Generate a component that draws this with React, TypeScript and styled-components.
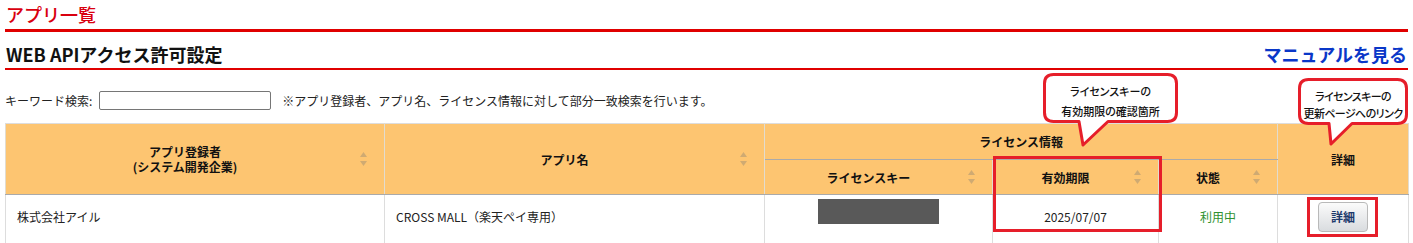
import React from 'react';
import styled, { createGlobalStyle } from 'styled-components';

const GlobalStyle = createGlobalStyle`
  *, *::before, *::after { box-sizing: border-box; }
  html, body { margin: 0; padding: 0; background: #fff; }
  body {
    font-family: "Noto Sans CJK JP", "Noto Sans", sans-serif;
    color: #222;
  }
`;

const Page = styled.div`
  position: relative;
  width: 1413px;
  padding: 0 5px;
`;

const PageTitle = styled.h1`
  margin: 0;
  height: 32px;
  padding: 1px 0 0 1px;
  font-size: 18px;
  font-weight: 500;
  line-height: 26px;
  color: #d9000f;
  border-bottom: 3px solid #e00000;
`;

const SectionHeader = styled.div`
  display: flex;
  justify-content: space-between;
  align-items: flex-end;
  height: 38px;
  padding: 0 1px 3px 1px;
  border-bottom: 2px solid #e00000;
`;

const SectionTitle = styled.h2`
  margin: 0;
  font-size: 18px;
  font-weight: bold;
  line-height: 22px;
  color: #111;
`;

const ManualLink = styled.a`
  font-size: 18px;
  font-weight: bold;
  line-height: 22px;
  color: #0a37c8;
  text-decoration: none;
`;

const SearchRow = styled.div`
  display: flex;
  align-items: center;
  padding-top: 21px;
  font-size: 12px;
  line-height: 19px;
  color: #222;
`;

const SearchInput = styled.input`
  width: 172px;
  height: 19px;
  margin: 0 0 0 7px;
  padding: 0 3px;
  border: 1px solid #767676;
  border-radius: 2px;
  font-size: 12px;
`;

const Note = styled.span`
  margin-left: 11px;
`;

const Table = styled.table`
  margin-top: 13px;
  width: 1403px;
  table-layout: fixed;
  border-collapse: collapse;
  font-size: 12px;
`;

const Th = styled.th<{ $h?: number; $sort?: boolean; $sub?: boolean }>`
  position: relative;
  height: ${p => (p.$h ? `${p.$h}px` : 'auto')};
  padding: 0 ${p => (p.$sort ? 28 : 8)}px 0 8px;
  background: #fdc571;
  border: 1px solid #e2dccf;
  border-bottom: 1px solid #aaaaaa;
  border-top: 1px solid ${p => (p.$sub ? '#aaaaaa' : '#dddddd')};
  font-weight: bold;
  line-height: 15px;
  color: #111;
  text-align: center;
  vertical-align: middle;
`;

const Td = styled.td<{ $align?: 'left' | 'center' }>`
  height: 50px;
  padding: 0 11px 6px;
  border: 1px solid #dddddd;
  border-bottom: none;
  text-align: ${p => p.$align ?? 'center'};
  vertical-align: middle;
  color: #222;
  line-height: 18px;
`;

const SortMark = styled.span`
  position: absolute;
  right: 17px;
  top: 50%;
  width: 7px;
  height: 14px;
  margin-top: -7px;
  display: block;
`;

const MaskedKey = styled.div`
  width: 121px;
  height: 25px;
  margin: 0 auto 10px;
  background: #595959;
`;

const Status = styled.span`
  color: #2f922f;
`;

const DetailButton = styled.button`
  width: 50px;
  height: 30px;
  padding: 0;
  border: 1px solid #b9b9b9;
  border-radius: 4px;
  background: linear-gradient(#fbfbfb, #d9dcdf);
  font-family: inherit;
  font-size: 12px;
  font-weight: bold;
  color: #1d3a6c;
`;

const Highlight = styled.div<{ $x: number; $y: number; $w: number; $h: number }>`
  position: absolute;
  left: ${p => p.$x}px;
  top: ${p => p.$y}px;
  width: ${p => p.$w}px;
  height: ${p => p.$h}px;
  border: 3px solid #e61e2a;
  pointer-events: none;
`;

const CalloutBox = styled.div<{ $x: number; $y: number; $w: number; $h: number }>`
  position: absolute;
  left: ${p => p.$x}px;
  top: ${p => p.$y}px;
  width: ${p => p.$w}px;
  height: ${p => p.$h}px;
`;

const CalloutShape = styled.svg`
  position: absolute;
  left: 0;
  top: 0;
  overflow: visible;
`;

const CalloutText = styled.div<{ $lh: number; $pt: number; $ls: number }>`
  position: relative;
  padding-top: ${p => p.$pt}px;
  font-size: 11px;
  font-weight: 500;
  line-height: ${p => p.$lh}px;
  letter-spacing: ${p => p.$ls}px;
  text-align: center;
  color: #111;
  font-feature-settings: "palt";
  white-space: nowrap;
`;

const SortIcon = () => (
  <SortMark>
    <svg width="7" height="14" viewBox="0 0 7 14">
      <polygon points="0,5 3.5,0 7,5" fill="#cfaa72" />
      <polygon points="0,9 7,9 3.5,14" fill="#cfaa72" />
    </svg>
  </SortMark>
);

type CalloutProps = {
  x: number;
  y: number;
  w: number;
  h: number;
  tail: [number, number, number, number];
  lh: number;
  pt: number;
  ls: number;
  lines: string[];
};

const Callout = ({ x, y, w, h, tail, lh, pt, ls, lines }: CalloutProps) => {
  const [tx1, tipX, tipY, tx2] = tail;
  const r = 9;
  const i = 1.5;
  const b = h - i;
  const rr = w - i;
  const d = [
    `M ${i + r} ${i}`,
    `H ${rr - r}`,
    `Q ${rr} ${i} ${rr} ${i + r}`,
    `V ${b - r}`,
    `Q ${rr} ${b} ${rr - r} ${b}`,
    `H ${tx2}`,
    `L ${tipX} ${tipY}`,
    `L ${tx1} ${b}`,
    `H ${i + r}`,
    `Q ${i} ${b} ${i} ${b - r}`,
    `V ${i + r}`,
    `Q ${i} ${i} ${i + r} ${i}`,
    'Z',
  ].join(' ');
  return (
    <CalloutBox $x={x} $y={y} $w={w} $h={h}>
      <CalloutShape width={w} height={h} viewBox={`0 0 ${w} ${h}`}>
        <path d={d} fill="#fff" stroke="#e61e2a" strokeWidth="3" strokeLinejoin="round" />
      </CalloutShape>
      <CalloutText $lh={lh} $pt={pt} $ls={ls}>
        {lines.map(l => (
          <div key={l}>{l}</div>
        ))}
      </CalloutText>
    </CalloutBox>
  );
};

export default function App() {
  return (
    <>
      <GlobalStyle />
      <Page>
        <PageTitle>アプリ一覧</PageTitle>
        <SectionHeader>
          <SectionTitle>WEB APIアクセス許可設定</SectionTitle>
          <ManualLink href="#">マニュアルを見る</ManualLink>
        </SectionHeader>
        <SearchRow>
          <span>キーワード検索:</span>
          <SearchInput type="text" />
          <Note>※アプリ登録者、アプリ名、ライセンス情報に対して部分一致検索を行います。</Note>
        </SearchRow>
        <Table>
          <colgroup>
            <col style={{ width: 379 }} />
            <col style={{ width: 380 }} />
            <col style={{ width: 228 }} />
            <col style={{ width: 166 }} />
            <col style={{ width: 119 }} />
            <col style={{ width: 131 }} />
          </colgroup>
          <thead>
            <tr>
              <Th rowSpan={2} $sort>
                アプリ登録者
                <br />
                (システム開発企業)
                <SortIcon />
              </Th>
              <Th rowSpan={2} $sort>
                アプリ名
                <SortIcon />
              </Th>
              <Th colSpan={3} $h={36}>
                ライセンス情報
              </Th>
              <Th rowSpan={2}>詳細</Th>
            </tr>
            <tr>
              <Th $sort $sub $h={35}>
                ライセンスキー
                <SortIcon />
              </Th>
              <Th $sort $sub>
                有効期限
                <SortIcon />
              </Th>
              <Th $sort $sub>
                状態
                <SortIcon />
              </Th>
            </tr>
          </thead>
          <tbody>
            <tr>
              <Td $align="left">株式会社アイル</Td>
              <Td $align="left">CROSS MALL（楽天ペイ専用）</Td>
              <Td>
                <MaskedKey />
              </Td>
              <Td>2025/07/07</Td>
              <Td>
                <Status>利用中</Status>
              </Td>
              <Td>
                <DetailButton type="button">詳細</DetailButton>
              </Td>
            </tr>
          </tbody>
        </Table>

        <Highlight $x={993} $y={156} $w={169} $h={76} />
        <Highlight $x={1307} $y={197} $w={71} $h={40} />

        <Callout
          x={1043}
          y={73}
          w={135}
          h={50}
          tail={[36, 40, 72, 65]}
          lh={20}
          pt={8}
          ls={0}
          lines={['ライセンスキーの', '有効期限の確認箇所']}
        />
        <Callout
          x={1298}
          y={78}
          w={110}
          h={47}
          tail={[31, 33, 66, 54]}
          lh={17}
          pt={10}
          ls={-0.6}
          lines={['ライセンスキーの', '更新ページへのリンク']}
        />
      </Page>
    </>
  );
}
